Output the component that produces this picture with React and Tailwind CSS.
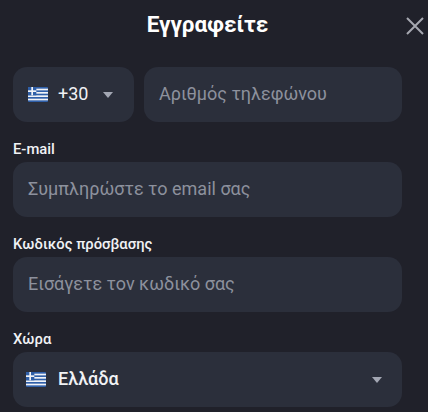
const fieldClass = "h-[55px] rounded-[14px] bg-[#2b2f3b] flex items-center";
const labelClass = "h-[40px] pb-[4px] flex items-end text-[14.8px] leading-[18px] font-medium text-[#f1f2f5]";

function GreekFlag({ className }) {
  return (
    <svg viewBox="0 0 20 15" className={className}>
      <rect width="20" height="15" rx="1" fill="#2f5fa8" />
      <rect y="1.67" width="20" height="1.67" fill="#f1f3f7" />
      <rect y="5" width="20" height="1.67" fill="#f1f3f7" />
      <rect y="8.33" width="20" height="1.67" fill="#f1f3f7" />
      <rect y="11.67" width="20" height="1.67" fill="#f1f3f7" />
      <rect width="8.33" height="8.33" fill="#2f5fa8" />
      <rect x="3.33" width="1.67" height="8.33" fill="#f1f3f7" />
      <rect y="3.33" width="8.33" height="1.67" fill="#f1f3f7" />
    </svg>
  );
}

function Caret() {
  return (
    <svg viewBox="0 0 10 6" className="w-[10px] h-[6px]">
      <path d="M0 0h10L5 6z" fill="#a3a7b3" />
    </svg>
  );
}

function Field({ label, placeholder }) {
  return (
    <div className="flex flex-col">
      <label className={labelClass}>{label}</label>
      <div className={`${fieldClass} px-[15px] pb-[2px] text-[18px] text-[#8d919d]`}>{placeholder}</div>
    </div>
  );
}

export default function App() {
  return (
    <div className="w-[428px] h-[412px] overflow-hidden bg-[#20212a] font-['Roboto',sans-serif]">
      <div className="relative w-[415px] h-[67px] pb-[18px] flex items-center justify-center">
        <h1 className="text-[22.5px] font-bold text-white leading-none">Εγγραφείτε</h1>
        <svg viewBox="0 0 18 18" className="absolute top-[17px] -right-[9px] w-[18px] h-[18px]" fill="none" stroke="#a6a8b0" strokeWidth="2">
          <path d="M1 1l16 16M17 1L1 17" />
        </svg>
      </div>
      <div className="px-[13px] w-[415px] flex flex-col">
        <div className="flex gap-[10px]">
          <div className={`${fieldClass} w-[121px] shrink-0 pl-[15px]`}>
            <GreekFlag className="w-[20px] h-[15px]" />
            <span className="ml-[10px] pb-[2px] text-[18px] text-[#f1f2f5]">+30</span>
            <span className="ml-[15px] flex"><Caret /></span>
          </div>
          <div className={`${fieldClass} flex-1 px-[15px] pb-[2px] text-[18px] text-[#8d919d]`}>Αριθμός τηλεφώνου</div>
        </div>
        <Field label="E-mail" placeholder="Συμπληρώστε το email σας" />
        <Field label="Κωδικός πρόσβασης" placeholder="Εισάγετε τον κωδικό σας" />
        <div className="flex flex-col">
          <label className={labelClass}>Χώρα</label>
          <div className={`${fieldClass} pl-[13px] pr-[20px]`}>
            <GreekFlag className="w-[20px] h-[15px]" />
            <span className="ml-[12px] pb-[2px] text-[18px] font-medium text-[#f1f2f5] flex-1">Ελλάδα</span>
            <Caret />
          </div>
        </div>
      </div>
    </div>
  );
}
